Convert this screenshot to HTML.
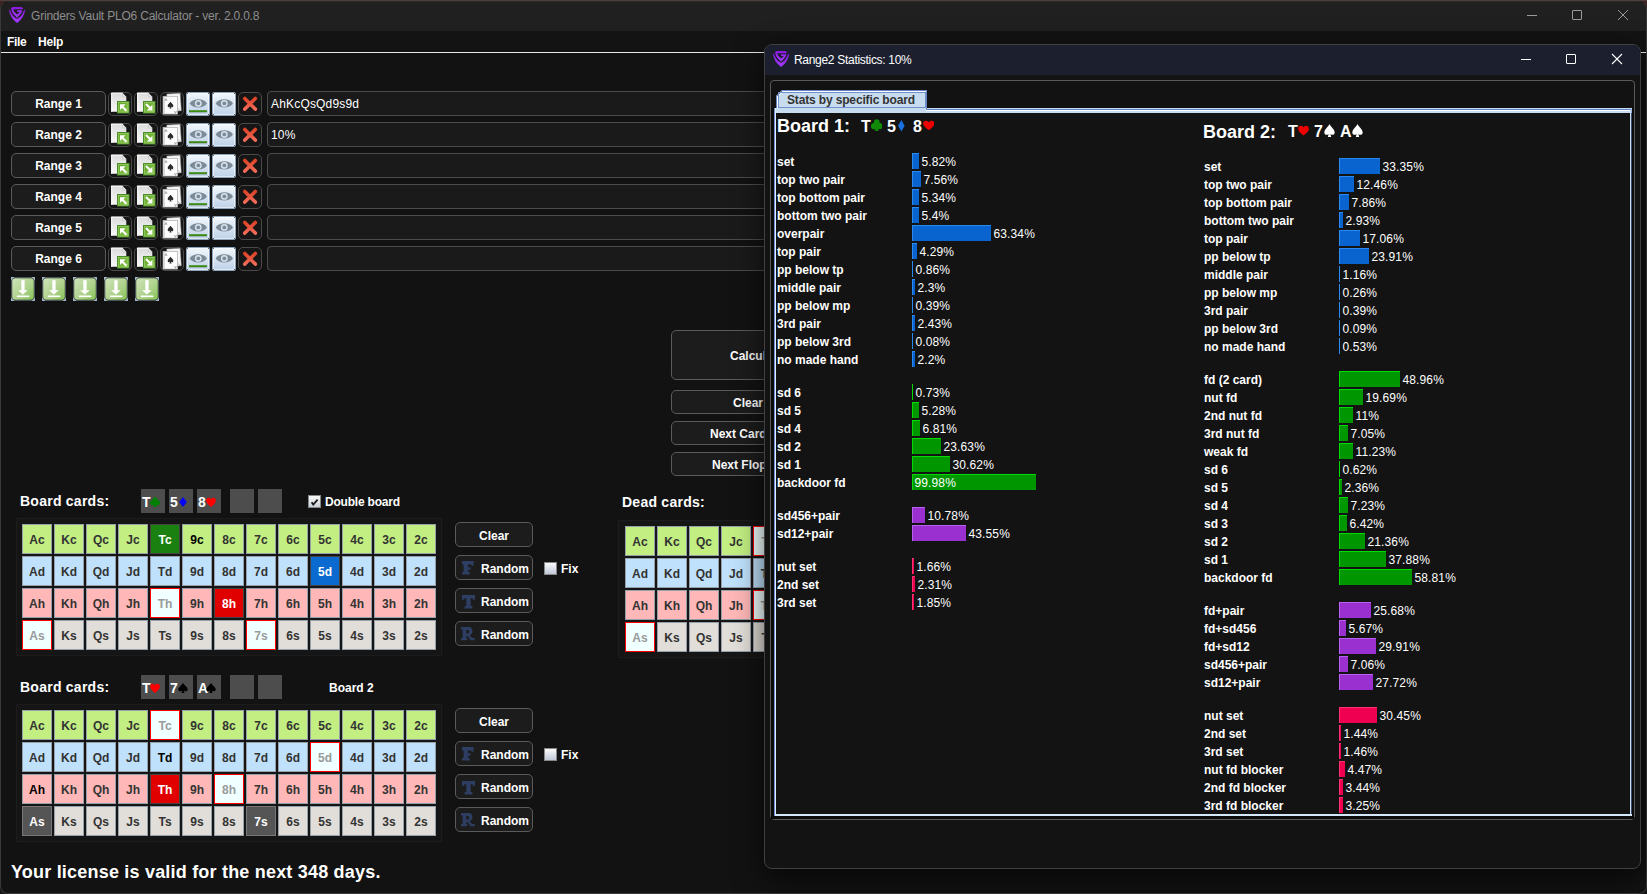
<!DOCTYPE html><html><head><meta charset='utf-8'><style>
*{box-sizing:border-box;margin:0;padding:0}
html,body{width:1647px;height:894px;overflow:hidden;background:#121212;font-family:"Liberation Sans", sans-serif}
.abs{position:absolute}
.t{position:absolute;white-space:nowrap;line-height:1}
.btn{position:absolute;border:1px solid #5a5a5a;border-radius:5px;background:#1c1c1c;color:#fff;font:bold 12px "Liberation Sans", sans-serif;text-align:center}
.ib{position:absolute;width:24px;height:24px;border:1px solid #4a4a4a;border-radius:5px;background:#161616}
.card{position:absolute;width:30px;height:30px;border:1px solid #96a0aa;font:bold 12px "Liberation Sans", sans-serif;color:#333;text-align:center;line-height:30px}
.c{background:#c2ee82} .d{background:#bfe1fb} .h{background:#ffb7b7} .s{background:#e1ddd8}
.slot{position:absolute;width:24px;height:24px;background:#4d4d4d;color:#fff;font:bold 12px "Liberation Sans", sans-serif;line-height:24px;white-space:nowrap;overflow:hidden}
.lbl{position:absolute;color:#fff;font:bold 12px "Liberation Sans", sans-serif;white-space:nowrap;line-height:14px;letter-spacing:0px}
.pct{position:absolute;color:#fff;font:12px "Liberation Sans", sans-serif;white-space:nowrap;line-height:14px;letter-spacing:0.12px}
.bar{position:absolute;height:16px}
</style></head><body>
<div class=abs style='left:0;top:0;width:1647px;height:894px;background:#161616'></div>
<div class=abs style='left:0;top:0;width:12px;height:12px;background:#3c2422'></div>
<div class=abs style='left:1635px;top:0;width:12px;height:12px;background:#3c2422'></div>
<div class=abs style='left:0;top:0;width:1647px;height:1px;background:#4e3f3d'></div>
<div class=abs style='left:0;top:1px;width:1647px;height:893px;border:1px solid #383838;border-top-color:#2a2a2a;border-radius:8px;background:#121212;overflow:hidden'>
<div class=abs style='left:0;top:0;width:1647px;height:30px;background:#202020'></div>
</div>
<svg class=abs style='left:5px;top:4px' width='24' height='22' viewBox='0 0 24 22'>
<defs><linearGradient id='lg9' x1='0' y1='0' x2='0' y2='1'><stop offset='0' stop-color='#8a18e0'/><stop offset='1' stop-color='#a43cff'/></linearGradient></defs>
<path d='M3.9 5.6 Q4.6 13.5 12.07 19.1 Q19.54 13.5 20.24 5.6 L19.14 5.9 Q17.0 12.6 12.07 14.8 Q7.14 12.6 5.0 5.9 Z' fill='url(#lg9)'/>
<path d='M6.0 4.2 L7.6 2.9 L16.6 2.9 L18.2 4.8 L17.7 5.3 L8.4 5.3 L9.1 7.4 L12.07 10.6 L14.8 8.1 L12.07 8.1 L12.07 6.2 L17.1 6.2 L17.2 7.4 L15.8 9.85 L12.07 13.8 L8.1 9.85 L6.9 7.4 Z' fill='url(#lg9)'/>
</svg>
<div class=t style='left:31px;top:9px;color:#8e8e8e;font:12px "Liberation Sans", sans-serif;letter-spacing:-0.2px'>Grinders Vault PLO6 Calculator - ver. 2.0.0.8</div>
<div class=abs style='left:1527px;top:15px;width:10px;height:1px;background:#9a9a9a'></div>
<div class=abs style='left:1572px;top:10px;width:10px;height:10px;border:1px solid #9a9a9a;border-radius:1px'></div>
<svg class=abs style='left:1617px;top:9px' width='12' height='12'><path d='M1 1L11 11M11 1L1 11' stroke='#9a9a9a' stroke-width='1'/></svg>
<div class=abs style='left:1px;top:31px;width:1645px;height:21px;background:#131313'></div>
<div class=t style='left:7px;top:35px;color:#fff;font:bold 12px "Liberation Sans", sans-serif;letter-spacing:-0.3px'>File</div>
<div class=t style='left:38px;top:35px;color:#fff;font:bold 12px "Liberation Sans", sans-serif;letter-spacing:-0.2px'>Help</div>
<div class=abs style='left:1px;top:52px;width:1645px;height:1px;background:#e8e8e8'></div>
<div class=btn style='left:11px;top:91px;width:95px;height:25px;line-height:25px'>Range 1</div>
<div class=ib style='left:108px;top:92px'><svg class=abs style='left:-1px;top:-1px' width='24' height='24' viewBox='0 0 24 24'>
<defs><linearGradient id='pg' x1='0' y1='0' x2='0' y2='1'><stop offset='0' stop-color='#dcdcdc'/><stop offset='1' stop-color='#f8f8f8'/></linearGradient>
<linearGradient id='gq' x1='0' y1='0' x2='1' y2='1'><stop offset='0' stop-color='#5aa022'/><stop offset='1' stop-color='#8cc850'/></linearGradient></defs>
<path d='M3.2 1.1 H14.7 L18.3 4.8 V19.8 H3.2 Z' fill='url(#pg)'/>
<path d='M3.2 1.1 H14.7 M3.7 1.1 V19.8' stroke='#fff' stroke-width='1'/>
<path d='M14.6 2 V4.9 H17.6' stroke='#b8b8b8' stroke-width='0.6' fill='#f0f0f0'/>
<rect x='9.5' y='9.5' width='11.5' height='11.5' fill='url(#gq)' stroke='#4a8c2a' stroke-width='1'/>
<rect x='10.5' y='10.5' width='9.5' height='9.5' fill='none' stroke='#a8d878' stroke-width='0.7' opacity='0.8'/>
<path d='M12 12.3 H17.6 L12 17.9 Z' fill='#fff'/><path d='M13.6 13.9 L18.4 18.7' stroke='#fff' stroke-width='2.1'/>
</svg></div>
<div class=ib style='left:134px;top:92px'><svg class=abs style='left:-1px;top:-1px' width='24' height='24' viewBox='0 0 24 24'>
<defs><linearGradient id='pg' x1='0' y1='0' x2='0' y2='1'><stop offset='0' stop-color='#dcdcdc'/><stop offset='1' stop-color='#f8f8f8'/></linearGradient>
<linearGradient id='gq' x1='0' y1='0' x2='1' y2='1'><stop offset='0' stop-color='#5aa022'/><stop offset='1' stop-color='#8cc850'/></linearGradient></defs>
<path d='M3.2 1.1 H14.7 L18.3 4.8 V19.8 H3.2 Z' fill='url(#pg)'/>
<path d='M3.2 1.1 H14.7 M3.7 1.1 V19.8' stroke='#fff' stroke-width='1'/>
<path d='M14.6 2 V4.9 H17.6' stroke='#b8b8b8' stroke-width='0.6' fill='#f0f0f0'/>
<rect x='9.5' y='9.5' width='11.5' height='11.5' fill='url(#gq)' stroke='#4a8c2a' stroke-width='1'/>
<rect x='10.5' y='10.5' width='9.5' height='9.5' fill='none' stroke='#a8d878' stroke-width='0.7' opacity='0.8'/>
<path d='M18.4 18.4 V12.8 L12.8 18.4 Z' fill='#fff'/><path d='M12 12 L16.8 16.8' stroke='#fff' stroke-width='2.1'/>
</svg></div>
<div class=ib style='left:160px;top:92px'><svg class=abs style='left:-1px;top:-1px' width='24' height='24' viewBox='0 0 24 24'>
<rect x='7.3' y='1.6' width='13.4' height='17.6' fill='#f6f6f6' stroke='#9a9a9a' stroke-width='0.5' transform='rotate(-4 14 10)'/><path d='M18.5 16.5 L19.5 18.5' stroke='#888' stroke-width='0.6'/>
<rect x='3' y='4.3' width='14.6' height='17.8' fill='#fdfdfd' stroke='#a8a8a8' stroke-width='0.7'/>
<rect x='3.4' y='4.7' width='1.4' height='17' fill='#cfcfcf'/>
<path d='M10.5 9.8 C9 11.8 7.7 12.4 7.7 13.9 C7.7 15.2 9.2 15.6 10.1 14.6 L9.5 16.6 H11.5 L10.9 14.6 C11.8 15.6 13.3 15.2 13.3 13.9 C13.3 12.4 12 11.8 10.5 9.8Z' fill='#2a2a2a'/>
<path d='M5 9 L6 6.5 L7 9' stroke='#777' stroke-width='0.6' fill='none'/>
<path d='M14.5 19 L15.5 21.3 L16.5 19' stroke='#777' stroke-width='0.6' fill='none'/>
</svg></div>
<div class=abs style='left:186px;top:92px;width:24px;height:24px;border:1px solid #8ea4ba;border-radius:2px;background:linear-gradient(#f2f7fc,#bed2e8);box-shadow:inset 0 0 0 1px rgba(255,255,255,0.5)'><svg class=abs style='left:-1px;top:-1px' width='24' height='24' viewBox='0 0 24 24'>
<path d='M3.6 11.4 C7 5.9 17.6 5.9 21 11.4 C17.6 16.9 7 16.9 3.6 11.4Z' fill='#7b8b98'/>
<circle cx='12.3' cy='11.4' r='3.4' fill='#d8e2ec'/><circle cx='12.3' cy='11.4' r='1.9' fill='#7b8b98'/>
<path d='M0.5 0.5 L2 2 M23.5 0.5 L22 2 M0.5 23.5 L2 22 M23.5 23.5 L22 22' stroke='#444' stroke-width='0.8'/>
<rect x='3' y='18.2' width='18' height='2' fill='#3c8a12'/><rect x='3.5' y='20.2' width='17' height='0.8' fill='#9aa8b4' opacity='0.7'/></svg></div>
<div class=abs style='left:212px;top:92px;width:24px;height:24px;border:1px solid #8ea4ba;border-radius:2px;background:linear-gradient(#f2f7fc,#bed2e8);box-shadow:inset 0 0 0 1px rgba(255,255,255,0.5)'><svg class=abs style='left:-1px;top:-1px' width='24' height='24' viewBox='0 0 24 24'>
<path d='M3.6 11.4 C7 5.9 17.6 5.9 21 11.4 C17.6 16.9 7 16.9 3.6 11.4Z' fill='#7b8b98'/>
<circle cx='12.3' cy='11.4' r='3.4' fill='#d8e2ec'/><circle cx='12.3' cy='11.4' r='1.9' fill='#7b8b98'/>
<path d='M0.5 0.5 L2 2 M23.5 0.5 L22 2 M0.5 23.5 L2 22 M23.5 23.5 L22 22' stroke='#444' stroke-width='0.8'/>
</svg></div>
<div class=ib style='left:238px;top:92px'><svg class=abs style='left:-1px;top:-1px' width='24' height='24' viewBox='0 0 24 24'>
<defs><linearGradient id='xg' x1='0' y1='0' x2='0' y2='1'><stop offset='0' stop-color='#dc4428'/><stop offset='1' stop-color='#f46c5a'/></linearGradient></defs>
<path d='M6.8 6.5 L17.3 17.1 M17.3 6.5 L6.8 17.1' stroke='url(#xg)' stroke-width='3.6' stroke-linecap='round'/>
</svg></div>
<div class=abs style='left:267px;top:91px;width:520px;height:25px;border:1px solid #4c4c4c;border-radius:4px;background:#1a1a1a'></div>
<div class=t style='left:271px;top:97px;color:#fff;font:12px "Liberation Sans", sans-serif;letter-spacing:0.18px'>AhKcQsQd9s9d</div>
<div class=btn style='left:11px;top:122px;width:95px;height:25px;line-height:25px'>Range 2</div>
<div class=ib style='left:108px;top:123px'><svg class=abs style='left:-1px;top:-1px' width='24' height='24' viewBox='0 0 24 24'>
<defs><linearGradient id='pg' x1='0' y1='0' x2='0' y2='1'><stop offset='0' stop-color='#dcdcdc'/><stop offset='1' stop-color='#f8f8f8'/></linearGradient>
<linearGradient id='gq' x1='0' y1='0' x2='1' y2='1'><stop offset='0' stop-color='#5aa022'/><stop offset='1' stop-color='#8cc850'/></linearGradient></defs>
<path d='M3.2 1.1 H14.7 L18.3 4.8 V19.8 H3.2 Z' fill='url(#pg)'/>
<path d='M3.2 1.1 H14.7 M3.7 1.1 V19.8' stroke='#fff' stroke-width='1'/>
<path d='M14.6 2 V4.9 H17.6' stroke='#b8b8b8' stroke-width='0.6' fill='#f0f0f0'/>
<rect x='9.5' y='9.5' width='11.5' height='11.5' fill='url(#gq)' stroke='#4a8c2a' stroke-width='1'/>
<rect x='10.5' y='10.5' width='9.5' height='9.5' fill='none' stroke='#a8d878' stroke-width='0.7' opacity='0.8'/>
<path d='M12 12.3 H17.6 L12 17.9 Z' fill='#fff'/><path d='M13.6 13.9 L18.4 18.7' stroke='#fff' stroke-width='2.1'/>
</svg></div>
<div class=ib style='left:134px;top:123px'><svg class=abs style='left:-1px;top:-1px' width='24' height='24' viewBox='0 0 24 24'>
<defs><linearGradient id='pg' x1='0' y1='0' x2='0' y2='1'><stop offset='0' stop-color='#dcdcdc'/><stop offset='1' stop-color='#f8f8f8'/></linearGradient>
<linearGradient id='gq' x1='0' y1='0' x2='1' y2='1'><stop offset='0' stop-color='#5aa022'/><stop offset='1' stop-color='#8cc850'/></linearGradient></defs>
<path d='M3.2 1.1 H14.7 L18.3 4.8 V19.8 H3.2 Z' fill='url(#pg)'/>
<path d='M3.2 1.1 H14.7 M3.7 1.1 V19.8' stroke='#fff' stroke-width='1'/>
<path d='M14.6 2 V4.9 H17.6' stroke='#b8b8b8' stroke-width='0.6' fill='#f0f0f0'/>
<rect x='9.5' y='9.5' width='11.5' height='11.5' fill='url(#gq)' stroke='#4a8c2a' stroke-width='1'/>
<rect x='10.5' y='10.5' width='9.5' height='9.5' fill='none' stroke='#a8d878' stroke-width='0.7' opacity='0.8'/>
<path d='M18.4 18.4 V12.8 L12.8 18.4 Z' fill='#fff'/><path d='M12 12 L16.8 16.8' stroke='#fff' stroke-width='2.1'/>
</svg></div>
<div class=ib style='left:160px;top:123px'><svg class=abs style='left:-1px;top:-1px' width='24' height='24' viewBox='0 0 24 24'>
<rect x='7.3' y='1.6' width='13.4' height='17.6' fill='#f6f6f6' stroke='#9a9a9a' stroke-width='0.5' transform='rotate(-4 14 10)'/><path d='M18.5 16.5 L19.5 18.5' stroke='#888' stroke-width='0.6'/>
<rect x='3' y='4.3' width='14.6' height='17.8' fill='#fdfdfd' stroke='#a8a8a8' stroke-width='0.7'/>
<rect x='3.4' y='4.7' width='1.4' height='17' fill='#cfcfcf'/>
<path d='M10.5 9.8 C9 11.8 7.7 12.4 7.7 13.9 C7.7 15.2 9.2 15.6 10.1 14.6 L9.5 16.6 H11.5 L10.9 14.6 C11.8 15.6 13.3 15.2 13.3 13.9 C13.3 12.4 12 11.8 10.5 9.8Z' fill='#2a2a2a'/>
<path d='M5 9 L6 6.5 L7 9' stroke='#777' stroke-width='0.6' fill='none'/>
<path d='M14.5 19 L15.5 21.3 L16.5 19' stroke='#777' stroke-width='0.6' fill='none'/>
</svg></div>
<div class=abs style='left:186px;top:123px;width:24px;height:24px;border:1px solid #8ea4ba;border-radius:2px;background:linear-gradient(#f2f7fc,#bed2e8);box-shadow:inset 0 0 0 1px rgba(255,255,255,0.5)'><svg class=abs style='left:-1px;top:-1px' width='24' height='24' viewBox='0 0 24 24'>
<path d='M3.6 11.4 C7 5.9 17.6 5.9 21 11.4 C17.6 16.9 7 16.9 3.6 11.4Z' fill='#7b8b98'/>
<circle cx='12.3' cy='11.4' r='3.4' fill='#d8e2ec'/><circle cx='12.3' cy='11.4' r='1.9' fill='#7b8b98'/>
<path d='M0.5 0.5 L2 2 M23.5 0.5 L22 2 M0.5 23.5 L2 22 M23.5 23.5 L22 22' stroke='#444' stroke-width='0.8'/>
<rect x='3' y='18.2' width='18' height='2' fill='#3c8a12'/><rect x='3.5' y='20.2' width='17' height='0.8' fill='#9aa8b4' opacity='0.7'/></svg></div>
<div class=abs style='left:212px;top:123px;width:24px;height:24px;border:1px solid #8ea4ba;border-radius:2px;background:linear-gradient(#f2f7fc,#bed2e8);box-shadow:inset 0 0 0 1px rgba(255,255,255,0.5)'><svg class=abs style='left:-1px;top:-1px' width='24' height='24' viewBox='0 0 24 24'>
<path d='M3.6 11.4 C7 5.9 17.6 5.9 21 11.4 C17.6 16.9 7 16.9 3.6 11.4Z' fill='#7b8b98'/>
<circle cx='12.3' cy='11.4' r='3.4' fill='#d8e2ec'/><circle cx='12.3' cy='11.4' r='1.9' fill='#7b8b98'/>
<path d='M0.5 0.5 L2 2 M23.5 0.5 L22 2 M0.5 23.5 L2 22 M23.5 23.5 L22 22' stroke='#444' stroke-width='0.8'/>
</svg></div>
<div class=ib style='left:238px;top:123px'><svg class=abs style='left:-1px;top:-1px' width='24' height='24' viewBox='0 0 24 24'>
<defs><linearGradient id='xg' x1='0' y1='0' x2='0' y2='1'><stop offset='0' stop-color='#dc4428'/><stop offset='1' stop-color='#f46c5a'/></linearGradient></defs>
<path d='M6.8 6.5 L17.3 17.1 M17.3 6.5 L6.8 17.1' stroke='url(#xg)' stroke-width='3.6' stroke-linecap='round'/>
</svg></div>
<div class=abs style='left:267px;top:122px;width:520px;height:25px;border:1px solid #4c4c4c;border-radius:4px;background:#1a1a1a'></div>
<div class=t style='left:271px;top:128px;color:#fff;font:12px "Liberation Sans", sans-serif;letter-spacing:0.18px'>10%</div>
<div class=btn style='left:11px;top:153px;width:95px;height:25px;line-height:25px'>Range 3</div>
<div class=ib style='left:108px;top:154px'><svg class=abs style='left:-1px;top:-1px' width='24' height='24' viewBox='0 0 24 24'>
<defs><linearGradient id='pg' x1='0' y1='0' x2='0' y2='1'><stop offset='0' stop-color='#dcdcdc'/><stop offset='1' stop-color='#f8f8f8'/></linearGradient>
<linearGradient id='gq' x1='0' y1='0' x2='1' y2='1'><stop offset='0' stop-color='#5aa022'/><stop offset='1' stop-color='#8cc850'/></linearGradient></defs>
<path d='M3.2 1.1 H14.7 L18.3 4.8 V19.8 H3.2 Z' fill='url(#pg)'/>
<path d='M3.2 1.1 H14.7 M3.7 1.1 V19.8' stroke='#fff' stroke-width='1'/>
<path d='M14.6 2 V4.9 H17.6' stroke='#b8b8b8' stroke-width='0.6' fill='#f0f0f0'/>
<rect x='9.5' y='9.5' width='11.5' height='11.5' fill='url(#gq)' stroke='#4a8c2a' stroke-width='1'/>
<rect x='10.5' y='10.5' width='9.5' height='9.5' fill='none' stroke='#a8d878' stroke-width='0.7' opacity='0.8'/>
<path d='M12 12.3 H17.6 L12 17.9 Z' fill='#fff'/><path d='M13.6 13.9 L18.4 18.7' stroke='#fff' stroke-width='2.1'/>
</svg></div>
<div class=ib style='left:134px;top:154px'><svg class=abs style='left:-1px;top:-1px' width='24' height='24' viewBox='0 0 24 24'>
<defs><linearGradient id='pg' x1='0' y1='0' x2='0' y2='1'><stop offset='0' stop-color='#dcdcdc'/><stop offset='1' stop-color='#f8f8f8'/></linearGradient>
<linearGradient id='gq' x1='0' y1='0' x2='1' y2='1'><stop offset='0' stop-color='#5aa022'/><stop offset='1' stop-color='#8cc850'/></linearGradient></defs>
<path d='M3.2 1.1 H14.7 L18.3 4.8 V19.8 H3.2 Z' fill='url(#pg)'/>
<path d='M3.2 1.1 H14.7 M3.7 1.1 V19.8' stroke='#fff' stroke-width='1'/>
<path d='M14.6 2 V4.9 H17.6' stroke='#b8b8b8' stroke-width='0.6' fill='#f0f0f0'/>
<rect x='9.5' y='9.5' width='11.5' height='11.5' fill='url(#gq)' stroke='#4a8c2a' stroke-width='1'/>
<rect x='10.5' y='10.5' width='9.5' height='9.5' fill='none' stroke='#a8d878' stroke-width='0.7' opacity='0.8'/>
<path d='M18.4 18.4 V12.8 L12.8 18.4 Z' fill='#fff'/><path d='M12 12 L16.8 16.8' stroke='#fff' stroke-width='2.1'/>
</svg></div>
<div class=ib style='left:160px;top:154px'><svg class=abs style='left:-1px;top:-1px' width='24' height='24' viewBox='0 0 24 24'>
<rect x='7.3' y='1.6' width='13.4' height='17.6' fill='#f6f6f6' stroke='#9a9a9a' stroke-width='0.5' transform='rotate(-4 14 10)'/><path d='M18.5 16.5 L19.5 18.5' stroke='#888' stroke-width='0.6'/>
<rect x='3' y='4.3' width='14.6' height='17.8' fill='#fdfdfd' stroke='#a8a8a8' stroke-width='0.7'/>
<rect x='3.4' y='4.7' width='1.4' height='17' fill='#cfcfcf'/>
<path d='M10.5 9.8 C9 11.8 7.7 12.4 7.7 13.9 C7.7 15.2 9.2 15.6 10.1 14.6 L9.5 16.6 H11.5 L10.9 14.6 C11.8 15.6 13.3 15.2 13.3 13.9 C13.3 12.4 12 11.8 10.5 9.8Z' fill='#2a2a2a'/>
<path d='M5 9 L6 6.5 L7 9' stroke='#777' stroke-width='0.6' fill='none'/>
<path d='M14.5 19 L15.5 21.3 L16.5 19' stroke='#777' stroke-width='0.6' fill='none'/>
</svg></div>
<div class=abs style='left:186px;top:154px;width:24px;height:24px;border:1px solid #8ea4ba;border-radius:2px;background:linear-gradient(#f2f7fc,#bed2e8);box-shadow:inset 0 0 0 1px rgba(255,255,255,0.5)'><svg class=abs style='left:-1px;top:-1px' width='24' height='24' viewBox='0 0 24 24'>
<path d='M3.6 11.4 C7 5.9 17.6 5.9 21 11.4 C17.6 16.9 7 16.9 3.6 11.4Z' fill='#7b8b98'/>
<circle cx='12.3' cy='11.4' r='3.4' fill='#d8e2ec'/><circle cx='12.3' cy='11.4' r='1.9' fill='#7b8b98'/>
<path d='M0.5 0.5 L2 2 M23.5 0.5 L22 2 M0.5 23.5 L2 22 M23.5 23.5 L22 22' stroke='#444' stroke-width='0.8'/>
<rect x='3' y='18.2' width='18' height='2' fill='#3c8a12'/><rect x='3.5' y='20.2' width='17' height='0.8' fill='#9aa8b4' opacity='0.7'/></svg></div>
<div class=abs style='left:212px;top:154px;width:24px;height:24px;border:1px solid #8ea4ba;border-radius:2px;background:linear-gradient(#f2f7fc,#bed2e8);box-shadow:inset 0 0 0 1px rgba(255,255,255,0.5)'><svg class=abs style='left:-1px;top:-1px' width='24' height='24' viewBox='0 0 24 24'>
<path d='M3.6 11.4 C7 5.9 17.6 5.9 21 11.4 C17.6 16.9 7 16.9 3.6 11.4Z' fill='#7b8b98'/>
<circle cx='12.3' cy='11.4' r='3.4' fill='#d8e2ec'/><circle cx='12.3' cy='11.4' r='1.9' fill='#7b8b98'/>
<path d='M0.5 0.5 L2 2 M23.5 0.5 L22 2 M0.5 23.5 L2 22 M23.5 23.5 L22 22' stroke='#444' stroke-width='0.8'/>
</svg></div>
<div class=ib style='left:238px;top:154px'><svg class=abs style='left:-1px;top:-1px' width='24' height='24' viewBox='0 0 24 24'>
<defs><linearGradient id='xg' x1='0' y1='0' x2='0' y2='1'><stop offset='0' stop-color='#dc4428'/><stop offset='1' stop-color='#f46c5a'/></linearGradient></defs>
<path d='M6.8 6.5 L17.3 17.1 M17.3 6.5 L6.8 17.1' stroke='url(#xg)' stroke-width='3.6' stroke-linecap='round'/>
</svg></div>
<div class=abs style='left:267px;top:153px;width:520px;height:25px;border:1px solid #4c4c4c;border-radius:4px;background:#1a1a1a'></div>
<div class=t style='left:271px;top:159px;color:#fff;font:12px "Liberation Sans", sans-serif;letter-spacing:0.18px'></div>
<div class=btn style='left:11px;top:184px;width:95px;height:25px;line-height:25px'>Range 4</div>
<div class=ib style='left:108px;top:185px'><svg class=abs style='left:-1px;top:-1px' width='24' height='24' viewBox='0 0 24 24'>
<defs><linearGradient id='pg' x1='0' y1='0' x2='0' y2='1'><stop offset='0' stop-color='#dcdcdc'/><stop offset='1' stop-color='#f8f8f8'/></linearGradient>
<linearGradient id='gq' x1='0' y1='0' x2='1' y2='1'><stop offset='0' stop-color='#5aa022'/><stop offset='1' stop-color='#8cc850'/></linearGradient></defs>
<path d='M3.2 1.1 H14.7 L18.3 4.8 V19.8 H3.2 Z' fill='url(#pg)'/>
<path d='M3.2 1.1 H14.7 M3.7 1.1 V19.8' stroke='#fff' stroke-width='1'/>
<path d='M14.6 2 V4.9 H17.6' stroke='#b8b8b8' stroke-width='0.6' fill='#f0f0f0'/>
<rect x='9.5' y='9.5' width='11.5' height='11.5' fill='url(#gq)' stroke='#4a8c2a' stroke-width='1'/>
<rect x='10.5' y='10.5' width='9.5' height='9.5' fill='none' stroke='#a8d878' stroke-width='0.7' opacity='0.8'/>
<path d='M12 12.3 H17.6 L12 17.9 Z' fill='#fff'/><path d='M13.6 13.9 L18.4 18.7' stroke='#fff' stroke-width='2.1'/>
</svg></div>
<div class=ib style='left:134px;top:185px'><svg class=abs style='left:-1px;top:-1px' width='24' height='24' viewBox='0 0 24 24'>
<defs><linearGradient id='pg' x1='0' y1='0' x2='0' y2='1'><stop offset='0' stop-color='#dcdcdc'/><stop offset='1' stop-color='#f8f8f8'/></linearGradient>
<linearGradient id='gq' x1='0' y1='0' x2='1' y2='1'><stop offset='0' stop-color='#5aa022'/><stop offset='1' stop-color='#8cc850'/></linearGradient></defs>
<path d='M3.2 1.1 H14.7 L18.3 4.8 V19.8 H3.2 Z' fill='url(#pg)'/>
<path d='M3.2 1.1 H14.7 M3.7 1.1 V19.8' stroke='#fff' stroke-width='1'/>
<path d='M14.6 2 V4.9 H17.6' stroke='#b8b8b8' stroke-width='0.6' fill='#f0f0f0'/>
<rect x='9.5' y='9.5' width='11.5' height='11.5' fill='url(#gq)' stroke='#4a8c2a' stroke-width='1'/>
<rect x='10.5' y='10.5' width='9.5' height='9.5' fill='none' stroke='#a8d878' stroke-width='0.7' opacity='0.8'/>
<path d='M18.4 18.4 V12.8 L12.8 18.4 Z' fill='#fff'/><path d='M12 12 L16.8 16.8' stroke='#fff' stroke-width='2.1'/>
</svg></div>
<div class=ib style='left:160px;top:185px'><svg class=abs style='left:-1px;top:-1px' width='24' height='24' viewBox='0 0 24 24'>
<rect x='7.3' y='1.6' width='13.4' height='17.6' fill='#f6f6f6' stroke='#9a9a9a' stroke-width='0.5' transform='rotate(-4 14 10)'/><path d='M18.5 16.5 L19.5 18.5' stroke='#888' stroke-width='0.6'/>
<rect x='3' y='4.3' width='14.6' height='17.8' fill='#fdfdfd' stroke='#a8a8a8' stroke-width='0.7'/>
<rect x='3.4' y='4.7' width='1.4' height='17' fill='#cfcfcf'/>
<path d='M10.5 9.8 C9 11.8 7.7 12.4 7.7 13.9 C7.7 15.2 9.2 15.6 10.1 14.6 L9.5 16.6 H11.5 L10.9 14.6 C11.8 15.6 13.3 15.2 13.3 13.9 C13.3 12.4 12 11.8 10.5 9.8Z' fill='#2a2a2a'/>
<path d='M5 9 L6 6.5 L7 9' stroke='#777' stroke-width='0.6' fill='none'/>
<path d='M14.5 19 L15.5 21.3 L16.5 19' stroke='#777' stroke-width='0.6' fill='none'/>
</svg></div>
<div class=abs style='left:186px;top:185px;width:24px;height:24px;border:1px solid #8ea4ba;border-radius:2px;background:linear-gradient(#f2f7fc,#bed2e8);box-shadow:inset 0 0 0 1px rgba(255,255,255,0.5)'><svg class=abs style='left:-1px;top:-1px' width='24' height='24' viewBox='0 0 24 24'>
<path d='M3.6 11.4 C7 5.9 17.6 5.9 21 11.4 C17.6 16.9 7 16.9 3.6 11.4Z' fill='#7b8b98'/>
<circle cx='12.3' cy='11.4' r='3.4' fill='#d8e2ec'/><circle cx='12.3' cy='11.4' r='1.9' fill='#7b8b98'/>
<path d='M0.5 0.5 L2 2 M23.5 0.5 L22 2 M0.5 23.5 L2 22 M23.5 23.5 L22 22' stroke='#444' stroke-width='0.8'/>
<rect x='3' y='18.2' width='18' height='2' fill='#3c8a12'/><rect x='3.5' y='20.2' width='17' height='0.8' fill='#9aa8b4' opacity='0.7'/></svg></div>
<div class=abs style='left:212px;top:185px;width:24px;height:24px;border:1px solid #8ea4ba;border-radius:2px;background:linear-gradient(#f2f7fc,#bed2e8);box-shadow:inset 0 0 0 1px rgba(255,255,255,0.5)'><svg class=abs style='left:-1px;top:-1px' width='24' height='24' viewBox='0 0 24 24'>
<path d='M3.6 11.4 C7 5.9 17.6 5.9 21 11.4 C17.6 16.9 7 16.9 3.6 11.4Z' fill='#7b8b98'/>
<circle cx='12.3' cy='11.4' r='3.4' fill='#d8e2ec'/><circle cx='12.3' cy='11.4' r='1.9' fill='#7b8b98'/>
<path d='M0.5 0.5 L2 2 M23.5 0.5 L22 2 M0.5 23.5 L2 22 M23.5 23.5 L22 22' stroke='#444' stroke-width='0.8'/>
</svg></div>
<div class=ib style='left:238px;top:185px'><svg class=abs style='left:-1px;top:-1px' width='24' height='24' viewBox='0 0 24 24'>
<defs><linearGradient id='xg' x1='0' y1='0' x2='0' y2='1'><stop offset='0' stop-color='#dc4428'/><stop offset='1' stop-color='#f46c5a'/></linearGradient></defs>
<path d='M6.8 6.5 L17.3 17.1 M17.3 6.5 L6.8 17.1' stroke='url(#xg)' stroke-width='3.6' stroke-linecap='round'/>
</svg></div>
<div class=abs style='left:267px;top:184px;width:520px;height:25px;border:1px solid #4c4c4c;border-radius:4px;background:#1a1a1a'></div>
<div class=t style='left:271px;top:190px;color:#fff;font:12px "Liberation Sans", sans-serif;letter-spacing:0.18px'></div>
<div class=btn style='left:11px;top:215px;width:95px;height:25px;line-height:25px'>Range 5</div>
<div class=ib style='left:108px;top:216px'><svg class=abs style='left:-1px;top:-1px' width='24' height='24' viewBox='0 0 24 24'>
<defs><linearGradient id='pg' x1='0' y1='0' x2='0' y2='1'><stop offset='0' stop-color='#dcdcdc'/><stop offset='1' stop-color='#f8f8f8'/></linearGradient>
<linearGradient id='gq' x1='0' y1='0' x2='1' y2='1'><stop offset='0' stop-color='#5aa022'/><stop offset='1' stop-color='#8cc850'/></linearGradient></defs>
<path d='M3.2 1.1 H14.7 L18.3 4.8 V19.8 H3.2 Z' fill='url(#pg)'/>
<path d='M3.2 1.1 H14.7 M3.7 1.1 V19.8' stroke='#fff' stroke-width='1'/>
<path d='M14.6 2 V4.9 H17.6' stroke='#b8b8b8' stroke-width='0.6' fill='#f0f0f0'/>
<rect x='9.5' y='9.5' width='11.5' height='11.5' fill='url(#gq)' stroke='#4a8c2a' stroke-width='1'/>
<rect x='10.5' y='10.5' width='9.5' height='9.5' fill='none' stroke='#a8d878' stroke-width='0.7' opacity='0.8'/>
<path d='M12 12.3 H17.6 L12 17.9 Z' fill='#fff'/><path d='M13.6 13.9 L18.4 18.7' stroke='#fff' stroke-width='2.1'/>
</svg></div>
<div class=ib style='left:134px;top:216px'><svg class=abs style='left:-1px;top:-1px' width='24' height='24' viewBox='0 0 24 24'>
<defs><linearGradient id='pg' x1='0' y1='0' x2='0' y2='1'><stop offset='0' stop-color='#dcdcdc'/><stop offset='1' stop-color='#f8f8f8'/></linearGradient>
<linearGradient id='gq' x1='0' y1='0' x2='1' y2='1'><stop offset='0' stop-color='#5aa022'/><stop offset='1' stop-color='#8cc850'/></linearGradient></defs>
<path d='M3.2 1.1 H14.7 L18.3 4.8 V19.8 H3.2 Z' fill='url(#pg)'/>
<path d='M3.2 1.1 H14.7 M3.7 1.1 V19.8' stroke='#fff' stroke-width='1'/>
<path d='M14.6 2 V4.9 H17.6' stroke='#b8b8b8' stroke-width='0.6' fill='#f0f0f0'/>
<rect x='9.5' y='9.5' width='11.5' height='11.5' fill='url(#gq)' stroke='#4a8c2a' stroke-width='1'/>
<rect x='10.5' y='10.5' width='9.5' height='9.5' fill='none' stroke='#a8d878' stroke-width='0.7' opacity='0.8'/>
<path d='M18.4 18.4 V12.8 L12.8 18.4 Z' fill='#fff'/><path d='M12 12 L16.8 16.8' stroke='#fff' stroke-width='2.1'/>
</svg></div>
<div class=ib style='left:160px;top:216px'><svg class=abs style='left:-1px;top:-1px' width='24' height='24' viewBox='0 0 24 24'>
<rect x='7.3' y='1.6' width='13.4' height='17.6' fill='#f6f6f6' stroke='#9a9a9a' stroke-width='0.5' transform='rotate(-4 14 10)'/><path d='M18.5 16.5 L19.5 18.5' stroke='#888' stroke-width='0.6'/>
<rect x='3' y='4.3' width='14.6' height='17.8' fill='#fdfdfd' stroke='#a8a8a8' stroke-width='0.7'/>
<rect x='3.4' y='4.7' width='1.4' height='17' fill='#cfcfcf'/>
<path d='M10.5 9.8 C9 11.8 7.7 12.4 7.7 13.9 C7.7 15.2 9.2 15.6 10.1 14.6 L9.5 16.6 H11.5 L10.9 14.6 C11.8 15.6 13.3 15.2 13.3 13.9 C13.3 12.4 12 11.8 10.5 9.8Z' fill='#2a2a2a'/>
<path d='M5 9 L6 6.5 L7 9' stroke='#777' stroke-width='0.6' fill='none'/>
<path d='M14.5 19 L15.5 21.3 L16.5 19' stroke='#777' stroke-width='0.6' fill='none'/>
</svg></div>
<div class=abs style='left:186px;top:216px;width:24px;height:24px;border:1px solid #8ea4ba;border-radius:2px;background:linear-gradient(#f2f7fc,#bed2e8);box-shadow:inset 0 0 0 1px rgba(255,255,255,0.5)'><svg class=abs style='left:-1px;top:-1px' width='24' height='24' viewBox='0 0 24 24'>
<path d='M3.6 11.4 C7 5.9 17.6 5.9 21 11.4 C17.6 16.9 7 16.9 3.6 11.4Z' fill='#7b8b98'/>
<circle cx='12.3' cy='11.4' r='3.4' fill='#d8e2ec'/><circle cx='12.3' cy='11.4' r='1.9' fill='#7b8b98'/>
<path d='M0.5 0.5 L2 2 M23.5 0.5 L22 2 M0.5 23.5 L2 22 M23.5 23.5 L22 22' stroke='#444' stroke-width='0.8'/>
<rect x='3' y='18.2' width='18' height='2' fill='#3c8a12'/><rect x='3.5' y='20.2' width='17' height='0.8' fill='#9aa8b4' opacity='0.7'/></svg></div>
<div class=abs style='left:212px;top:216px;width:24px;height:24px;border:1px solid #8ea4ba;border-radius:2px;background:linear-gradient(#f2f7fc,#bed2e8);box-shadow:inset 0 0 0 1px rgba(255,255,255,0.5)'><svg class=abs style='left:-1px;top:-1px' width='24' height='24' viewBox='0 0 24 24'>
<path d='M3.6 11.4 C7 5.9 17.6 5.9 21 11.4 C17.6 16.9 7 16.9 3.6 11.4Z' fill='#7b8b98'/>
<circle cx='12.3' cy='11.4' r='3.4' fill='#d8e2ec'/><circle cx='12.3' cy='11.4' r='1.9' fill='#7b8b98'/>
<path d='M0.5 0.5 L2 2 M23.5 0.5 L22 2 M0.5 23.5 L2 22 M23.5 23.5 L22 22' stroke='#444' stroke-width='0.8'/>
</svg></div>
<div class=ib style='left:238px;top:216px'><svg class=abs style='left:-1px;top:-1px' width='24' height='24' viewBox='0 0 24 24'>
<defs><linearGradient id='xg' x1='0' y1='0' x2='0' y2='1'><stop offset='0' stop-color='#dc4428'/><stop offset='1' stop-color='#f46c5a'/></linearGradient></defs>
<path d='M6.8 6.5 L17.3 17.1 M17.3 6.5 L6.8 17.1' stroke='url(#xg)' stroke-width='3.6' stroke-linecap='round'/>
</svg></div>
<div class=abs style='left:267px;top:215px;width:520px;height:25px;border:1px solid #4c4c4c;border-radius:4px;background:#1a1a1a'></div>
<div class=t style='left:271px;top:221px;color:#fff;font:12px "Liberation Sans", sans-serif;letter-spacing:0.18px'></div>
<div class=btn style='left:11px;top:246px;width:95px;height:25px;line-height:25px'>Range 6</div>
<div class=ib style='left:108px;top:247px'><svg class=abs style='left:-1px;top:-1px' width='24' height='24' viewBox='0 0 24 24'>
<defs><linearGradient id='pg' x1='0' y1='0' x2='0' y2='1'><stop offset='0' stop-color='#dcdcdc'/><stop offset='1' stop-color='#f8f8f8'/></linearGradient>
<linearGradient id='gq' x1='0' y1='0' x2='1' y2='1'><stop offset='0' stop-color='#5aa022'/><stop offset='1' stop-color='#8cc850'/></linearGradient></defs>
<path d='M3.2 1.1 H14.7 L18.3 4.8 V19.8 H3.2 Z' fill='url(#pg)'/>
<path d='M3.2 1.1 H14.7 M3.7 1.1 V19.8' stroke='#fff' stroke-width='1'/>
<path d='M14.6 2 V4.9 H17.6' stroke='#b8b8b8' stroke-width='0.6' fill='#f0f0f0'/>
<rect x='9.5' y='9.5' width='11.5' height='11.5' fill='url(#gq)' stroke='#4a8c2a' stroke-width='1'/>
<rect x='10.5' y='10.5' width='9.5' height='9.5' fill='none' stroke='#a8d878' stroke-width='0.7' opacity='0.8'/>
<path d='M12 12.3 H17.6 L12 17.9 Z' fill='#fff'/><path d='M13.6 13.9 L18.4 18.7' stroke='#fff' stroke-width='2.1'/>
</svg></div>
<div class=ib style='left:134px;top:247px'><svg class=abs style='left:-1px;top:-1px' width='24' height='24' viewBox='0 0 24 24'>
<defs><linearGradient id='pg' x1='0' y1='0' x2='0' y2='1'><stop offset='0' stop-color='#dcdcdc'/><stop offset='1' stop-color='#f8f8f8'/></linearGradient>
<linearGradient id='gq' x1='0' y1='0' x2='1' y2='1'><stop offset='0' stop-color='#5aa022'/><stop offset='1' stop-color='#8cc850'/></linearGradient></defs>
<path d='M3.2 1.1 H14.7 L18.3 4.8 V19.8 H3.2 Z' fill='url(#pg)'/>
<path d='M3.2 1.1 H14.7 M3.7 1.1 V19.8' stroke='#fff' stroke-width='1'/>
<path d='M14.6 2 V4.9 H17.6' stroke='#b8b8b8' stroke-width='0.6' fill='#f0f0f0'/>
<rect x='9.5' y='9.5' width='11.5' height='11.5' fill='url(#gq)' stroke='#4a8c2a' stroke-width='1'/>
<rect x='10.5' y='10.5' width='9.5' height='9.5' fill='none' stroke='#a8d878' stroke-width='0.7' opacity='0.8'/>
<path d='M18.4 18.4 V12.8 L12.8 18.4 Z' fill='#fff'/><path d='M12 12 L16.8 16.8' stroke='#fff' stroke-width='2.1'/>
</svg></div>
<div class=ib style='left:160px;top:247px'><svg class=abs style='left:-1px;top:-1px' width='24' height='24' viewBox='0 0 24 24'>
<rect x='7.3' y='1.6' width='13.4' height='17.6' fill='#f6f6f6' stroke='#9a9a9a' stroke-width='0.5' transform='rotate(-4 14 10)'/><path d='M18.5 16.5 L19.5 18.5' stroke='#888' stroke-width='0.6'/>
<rect x='3' y='4.3' width='14.6' height='17.8' fill='#fdfdfd' stroke='#a8a8a8' stroke-width='0.7'/>
<rect x='3.4' y='4.7' width='1.4' height='17' fill='#cfcfcf'/>
<path d='M10.5 9.8 C9 11.8 7.7 12.4 7.7 13.9 C7.7 15.2 9.2 15.6 10.1 14.6 L9.5 16.6 H11.5 L10.9 14.6 C11.8 15.6 13.3 15.2 13.3 13.9 C13.3 12.4 12 11.8 10.5 9.8Z' fill='#2a2a2a'/>
<path d='M5 9 L6 6.5 L7 9' stroke='#777' stroke-width='0.6' fill='none'/>
<path d='M14.5 19 L15.5 21.3 L16.5 19' stroke='#777' stroke-width='0.6' fill='none'/>
</svg></div>
<div class=abs style='left:186px;top:247px;width:24px;height:24px;border:1px solid #8ea4ba;border-radius:2px;background:linear-gradient(#f2f7fc,#bed2e8);box-shadow:inset 0 0 0 1px rgba(255,255,255,0.5)'><svg class=abs style='left:-1px;top:-1px' width='24' height='24' viewBox='0 0 24 24'>
<path d='M3.6 11.4 C7 5.9 17.6 5.9 21 11.4 C17.6 16.9 7 16.9 3.6 11.4Z' fill='#7b8b98'/>
<circle cx='12.3' cy='11.4' r='3.4' fill='#d8e2ec'/><circle cx='12.3' cy='11.4' r='1.9' fill='#7b8b98'/>
<path d='M0.5 0.5 L2 2 M23.5 0.5 L22 2 M0.5 23.5 L2 22 M23.5 23.5 L22 22' stroke='#444' stroke-width='0.8'/>
<rect x='3' y='18.2' width='18' height='2' fill='#3c8a12'/><rect x='3.5' y='20.2' width='17' height='0.8' fill='#9aa8b4' opacity='0.7'/></svg></div>
<div class=abs style='left:212px;top:247px;width:24px;height:24px;border:1px solid #8ea4ba;border-radius:2px;background:linear-gradient(#f2f7fc,#bed2e8);box-shadow:inset 0 0 0 1px rgba(255,255,255,0.5)'><svg class=abs style='left:-1px;top:-1px' width='24' height='24' viewBox='0 0 24 24'>
<path d='M3.6 11.4 C7 5.9 17.6 5.9 21 11.4 C17.6 16.9 7 16.9 3.6 11.4Z' fill='#7b8b98'/>
<circle cx='12.3' cy='11.4' r='3.4' fill='#d8e2ec'/><circle cx='12.3' cy='11.4' r='1.9' fill='#7b8b98'/>
<path d='M0.5 0.5 L2 2 M23.5 0.5 L22 2 M0.5 23.5 L2 22 M23.5 23.5 L22 22' stroke='#444' stroke-width='0.8'/>
</svg></div>
<div class=ib style='left:238px;top:247px'><svg class=abs style='left:-1px;top:-1px' width='24' height='24' viewBox='0 0 24 24'>
<defs><linearGradient id='xg' x1='0' y1='0' x2='0' y2='1'><stop offset='0' stop-color='#dc4428'/><stop offset='1' stop-color='#f46c5a'/></linearGradient></defs>
<path d='M6.8 6.5 L17.3 17.1 M17.3 6.5 L6.8 17.1' stroke='url(#xg)' stroke-width='3.6' stroke-linecap='round'/>
</svg></div>
<div class=abs style='left:267px;top:246px;width:520px;height:25px;border:1px solid #4c4c4c;border-radius:4px;background:#1a1a1a'></div>
<div class=t style='left:271px;top:252px;color:#fff;font:12px "Liberation Sans", sans-serif;letter-spacing:0.18px'></div>
<svg class=abs style='left:11px;top:277px' width='24' height='24' viewBox='0 0 24 24'>
<defs><linearGradient id='dg' x1='0' y1='0' x2='1' y2='1'><stop offset='0' stop-color='#d0e4ba'/><stop offset='0.55' stop-color='#b0d28e'/><stop offset='1' stop-color='#86c455'/></linearGradient></defs>
<rect x='0.5' y='0.5' width='23' height='23' fill='#1a1e20' stroke='#4a5458' stroke-width='1'/>
<path d='M0 0 H3.5 L0 3.5Z M24 0 H20.5 L24 3.5Z M0 24 H3.5 L0 20.5Z M24 24 H20.5 L24 20.5Z' fill='#9fb4c4'/>
<rect x='1.2' y='1.2' width='21.6' height='21.6' rx='3' fill='url(#dg)'/>
<rect x='10.3' y='3.2' width='3.3' height='10.5' fill='#fff'/><path d='M7.1 13.3 H16.7 L11.9 17.6Z' fill='#fff'/><rect x='5.9' y='18.5' width='12.4' height='1.6' fill='#fff'/>
</svg>
<svg class=abs style='left:42px;top:277px' width='24' height='24' viewBox='0 0 24 24'>
<defs><linearGradient id='dg' x1='0' y1='0' x2='1' y2='1'><stop offset='0' stop-color='#d0e4ba'/><stop offset='0.55' stop-color='#b0d28e'/><stop offset='1' stop-color='#86c455'/></linearGradient></defs>
<rect x='0.5' y='0.5' width='23' height='23' fill='#1a1e20' stroke='#4a5458' stroke-width='1'/>
<path d='M0 0 H3.5 L0 3.5Z M24 0 H20.5 L24 3.5Z M0 24 H3.5 L0 20.5Z M24 24 H20.5 L24 20.5Z' fill='#9fb4c4'/>
<rect x='1.2' y='1.2' width='21.6' height='21.6' rx='3' fill='url(#dg)'/>
<rect x='10.3' y='3.2' width='3.3' height='10.5' fill='#fff'/><path d='M7.1 13.3 H16.7 L11.9 17.6Z' fill='#fff'/><rect x='5.9' y='18.5' width='12.4' height='1.6' fill='#fff'/>
</svg>
<svg class=abs style='left:73px;top:277px' width='24' height='24' viewBox='0 0 24 24'>
<defs><linearGradient id='dg' x1='0' y1='0' x2='1' y2='1'><stop offset='0' stop-color='#d0e4ba'/><stop offset='0.55' stop-color='#b0d28e'/><stop offset='1' stop-color='#86c455'/></linearGradient></defs>
<rect x='0.5' y='0.5' width='23' height='23' fill='#1a1e20' stroke='#4a5458' stroke-width='1'/>
<path d='M0 0 H3.5 L0 3.5Z M24 0 H20.5 L24 3.5Z M0 24 H3.5 L0 20.5Z M24 24 H20.5 L24 20.5Z' fill='#9fb4c4'/>
<rect x='1.2' y='1.2' width='21.6' height='21.6' rx='3' fill='url(#dg)'/>
<rect x='10.3' y='3.2' width='3.3' height='10.5' fill='#fff'/><path d='M7.1 13.3 H16.7 L11.9 17.6Z' fill='#fff'/><rect x='5.9' y='18.5' width='12.4' height='1.6' fill='#fff'/>
</svg>
<svg class=abs style='left:104px;top:277px' width='24' height='24' viewBox='0 0 24 24'>
<defs><linearGradient id='dg' x1='0' y1='0' x2='1' y2='1'><stop offset='0' stop-color='#d0e4ba'/><stop offset='0.55' stop-color='#b0d28e'/><stop offset='1' stop-color='#86c455'/></linearGradient></defs>
<rect x='0.5' y='0.5' width='23' height='23' fill='#1a1e20' stroke='#4a5458' stroke-width='1'/>
<path d='M0 0 H3.5 L0 3.5Z M24 0 H20.5 L24 3.5Z M0 24 H3.5 L0 20.5Z M24 24 H20.5 L24 20.5Z' fill='#9fb4c4'/>
<rect x='1.2' y='1.2' width='21.6' height='21.6' rx='3' fill='url(#dg)'/>
<rect x='10.3' y='3.2' width='3.3' height='10.5' fill='#fff'/><path d='M7.1 13.3 H16.7 L11.9 17.6Z' fill='#fff'/><rect x='5.9' y='18.5' width='12.4' height='1.6' fill='#fff'/>
</svg>
<svg class=abs style='left:135px;top:277px' width='24' height='24' viewBox='0 0 24 24'>
<defs><linearGradient id='dg' x1='0' y1='0' x2='1' y2='1'><stop offset='0' stop-color='#d0e4ba'/><stop offset='0.55' stop-color='#b0d28e'/><stop offset='1' stop-color='#86c455'/></linearGradient></defs>
<rect x='0.5' y='0.5' width='23' height='23' fill='#1a1e20' stroke='#4a5458' stroke-width='1'/>
<path d='M0 0 H3.5 L0 3.5Z M24 0 H20.5 L24 3.5Z M0 24 H3.5 L0 20.5Z M24 24 H20.5 L24 20.5Z' fill='#9fb4c4'/>
<rect x='1.2' y='1.2' width='21.6' height='21.6' rx='3' fill='url(#dg)'/>
<rect x='10.3' y='3.2' width='3.3' height='10.5' fill='#fff'/><path d='M7.1 13.3 H16.7 L11.9 17.6Z' fill='#fff'/><rect x='5.9' y='18.5' width='12.4' height='1.6' fill='#fff'/>
</svg>
<div class=btn style='left:671px;top:330px;width:175px;height:50px;line-height:50px;padding-left:0px;text-align:left'><span style='position:absolute;left:58px'>Calculate</span></div>
<div class=btn style='left:671px;top:390px;width:175px;height:24px;line-height:24px;text-align:left'><span style='position:absolute;left:61px'>Clear</span></div>
<div class=btn style='left:671px;top:421px;width:175px;height:24px;line-height:24px;text-align:left'><span style='position:absolute;left:38px'>Next Card</span></div>
<div class=btn style='left:671px;top:452px;width:175px;height:24px;line-height:24px;text-align:left'><span style='position:absolute;left:40px'>Next Flop</span></div>
<div class=t style='left:20px;top:493px;color:#fff;font:bold 14px "Liberation Sans", sans-serif;letter-spacing:0.25px'>Board cards:</div>
<div class=slot style='left:141px;top:489px'></div><div class=t style='left:142px;top:495px;color:#fff;font:bold 14px "Liberation Sans", sans-serif;line-height:14px'>T</div><svg class=abs style='left:150px;top:497px' width='10' height='10' viewBox='0 0 10 10' preserveAspectRatio='none' fill='#008000'><circle cx='5' cy='2.7' r='2.5'/><circle cx='2.5' cy='5.7' r='2.5'/><circle cx='7.5' cy='5.7' r='2.5'/><path d='M5 4 L3.2 10 H6.8 Z'/></svg><div class=slot style='left:169px;top:489px'></div><div class=t style='left:170px;top:495px;color:#fff;font:bold 14px "Liberation Sans", sans-serif;line-height:14px'>5</div><svg class=abs style='left:178px;top:497px' width='10' height='10' viewBox='0 0 10 10' preserveAspectRatio='none' fill='#0000ff'><path d='M5 0 L8.8 5 L5 10 L1.2 5 Z'/></svg><div class=slot style='left:197px;top:489px'></div><div class=t style='left:198px;top:495px;color:#fff;font:bold 14px "Liberation Sans", sans-serif;line-height:14px'>8</div><svg class=abs style='left:206px;top:497px' width='10' height='10' viewBox='0 0 10 10' preserveAspectRatio='none' fill='#ff0000'><path d='M5 9.3 C2 6.6 0.1 5 0.1 2.8 C0.1 1.1 1.3 0.1 2.7 0.1 C3.8 0.1 4.6 0.8 5 1.7 C5.4 0.8 6.2 0.1 7.3 0.1 C8.7 0.1 9.9 1.1 9.9 2.8 C9.9 5 8 6.6 5 9.3Z' transform='translate(0 0.6)'/></svg><div class=slot style='left:230px;top:489px'></div><div class=slot style='left:258px;top:489px'></div>
<div class=abs style='left:308px;top:495px;width:13px;height:13px;border:1px solid #888;background:linear-gradient(#fafafa,#c8d0d8)'></div>
<svg class=abs style='left:309px;top:496px' width='11' height='11'><path d='M2.6 6.2 L4.3 8.6 L8.6 3.6' stroke='#1a1a1a' stroke-width='1.8' fill='none'/></svg>
<div class=t style='left:325px;top:495px;color:#fff;font:bold 12px "Liberation Sans", sans-serif;letter-spacing:-0.2px'>Double board</div>
<div class=abs style='left:16px;top:518px;width:426px;height:138px;border:1px solid #1c1c1c;background:#151515'></div>
<div class='card c' style='left:22px;top:524px'>Ac</div><div class='card c' style='left:54px;top:524px'>Kc</div><div class='card c' style='left:86px;top:524px'>Qc</div><div class='card c' style='left:118px;top:524px'>Jc</div><div class='card' style='left:150px;top:524px;background:#1a8010;color:#fff;border-color:#444'>Tc</div><div class='card c' style='left:182px;top:524px;color:#000'>9c</div><div class='card c' style='left:214px;top:524px'>8c</div><div class='card c' style='left:246px;top:524px'>7c</div><div class='card c' style='left:278px;top:524px'>6c</div><div class='card c' style='left:310px;top:524px'>5c</div><div class='card c' style='left:342px;top:524px'>4c</div><div class='card c' style='left:374px;top:524px'>3c</div><div class='card c' style='left:406px;top:524px'>2c</div><div class='card d' style='left:22px;top:556px'>Ad</div><div class='card d' style='left:54px;top:556px'>Kd</div><div class='card d' style='left:86px;top:556px'>Qd</div><div class='card d' style='left:118px;top:556px'>Jd</div><div class='card d' style='left:150px;top:556px'>Td</div><div class='card d' style='left:182px;top:556px'>9d</div><div class='card d' style='left:214px;top:556px'>8d</div><div class='card d' style='left:246px;top:556px'>7d</div><div class='card d' style='left:278px;top:556px'>6d</div><div class='card' style='left:310px;top:556px;background:#0a6ad0;color:#fff;border-color:#444'>5d</div><div class='card d' style='left:342px;top:556px'>4d</div><div class='card d' style='left:374px;top:556px'>3d</div><div class='card d' style='left:406px;top:556px'>2d</div><div class='card h' style='left:22px;top:588px'>Ah</div><div class='card h' style='left:54px;top:588px'>Kh</div><div class='card h' style='left:86px;top:588px'>Qh</div><div class='card h' style='left:118px;top:588px'>Jh</div><div class='card' style='left:150px;top:588px;background:#f0ffff;color:#9a9a9a;border:1px solid #ff0000;line-height:30px'>Th</div><div class='card h' style='left:182px;top:588px'>9h</div><div class='card' style='left:214px;top:588px;background:#e00000;color:#fff;border-color:#444'>8h</div><div class='card h' style='left:246px;top:588px'>7h</div><div class='card h' style='left:278px;top:588px'>6h</div><div class='card h' style='left:310px;top:588px'>5h</div><div class='card h' style='left:342px;top:588px'>4h</div><div class='card h' style='left:374px;top:588px'>3h</div><div class='card h' style='left:406px;top:588px'>2h</div><div class='card' style='left:22px;top:620px;background:#f0ffff;color:#9a9a9a;border:1px solid #ff0000;line-height:30px'>As</div><div class='card s' style='left:54px;top:620px'>Ks</div><div class='card s' style='left:86px;top:620px'>Qs</div><div class='card s' style='left:118px;top:620px'>Js</div><div class='card s' style='left:150px;top:620px'>Ts</div><div class='card s' style='left:182px;top:620px'>9s</div><div class='card s' style='left:214px;top:620px'>8s</div><div class='card' style='left:246px;top:620px;background:#f0ffff;color:#9a9a9a;border:1px solid #ff0000;line-height:30px'>7s</div><div class='card s' style='left:278px;top:620px'>6s</div><div class='card s' style='left:310px;top:620px'>5s</div><div class='card s' style='left:342px;top:620px'>4s</div><div class='card s' style='left:374px;top:620px'>3s</div><div class='card s' style='left:406px;top:620px'>2s</div>
<div class=btn style='left:455px;top:522px;width:78px;height:25px;line-height:27px'>Clear</div>
<div class=btn style='left:455px;top:555px;width:78px;height:25px;line-height:27px;text-align:left'><span style='position:absolute;left:25px'>Random</span></div>
<svg class=abs style='left:462.2px;top:561.2px' width='15' height='15' viewBox='0 0 15 15'><path d='M0 0 H11.6 V4.7 H9.4 V3.4 H5.95 V6.3 H8.5 V8.8 H5.95 V11 H7.8 V13.5 H0 V11 H1.6 V3.4 H0 Z' fill='#2d3e62' fill-rule='evenodd'/></svg>
<div class=btn style='left:455px;top:588px;width:78px;height:25px;line-height:27px;text-align:left'><span style='position:absolute;left:25px'>Random</span></div>
<svg class=abs style='left:461.9px;top:594.6px' width='15' height='15' viewBox='0 0 15 15'><path d='M0 0 H13 V4.7 H10.7 V3.3 H8.7 V11 H10.4 V13.4 H2.6 V11 H4.3 V3.3 H2.3 V4.7 H0 Z' fill='#2d3e62' fill-rule='evenodd'/></svg>
<div class=btn style='left:455px;top:621px;width:78px;height:25px;line-height:27px;text-align:left'><span style='position:absolute;left:25px'>Random</span></div>
<svg class=abs style='left:461.3px;top:627.2px' width='15' height='15' viewBox='0 0 15 15'><path d='M0 0 H8 C10.5 0 11.4 1.8 11.4 4.2 C11.4 6.3 10.2 7.6 8.6 8.2 L11.2 11 H13.8 V13.2 H9.6 L6.6 9 H5.3 V11 H6.3 V13.2 H0 V11 H1.6 V2.5 H0 Z M5.3 3 V6.4 H7 C7.9 6.4 8 5.6 8 4.7 C8 3.7 7.8 3 7 3 Z' fill='#2d3e62' fill-rule='evenodd'/></svg>
<div class=abs style='left:544px;top:562px;width:13px;height:13px;border:1px solid #888;background:linear-gradient(#fafafa,#c0c8d8)'></div>
<div class=t style='left:561px;top:562px;color:#fff;font:bold 12px "Liberation Sans", sans-serif'>Fix</div>
<div class=t style='left:20px;top:679px;color:#fff;font:bold 14px "Liberation Sans", sans-serif;letter-spacing:0.25px'>Board cards:</div>
<div class=slot style='left:141px;top:675px'></div><div class=t style='left:142px;top:681px;color:#fff;font:bold 14px "Liberation Sans", sans-serif;line-height:14px'>T</div><svg class=abs style='left:150px;top:683px' width='10' height='10' viewBox='0 0 10 10' preserveAspectRatio='none' fill='#ff0000'><path d='M5 9.3 C2 6.6 0.1 5 0.1 2.8 C0.1 1.1 1.3 0.1 2.7 0.1 C3.8 0.1 4.6 0.8 5 1.7 C5.4 0.8 6.2 0.1 7.3 0.1 C8.7 0.1 9.9 1.1 9.9 2.8 C9.9 5 8 6.6 5 9.3Z' transform='translate(0 0.6)'/></svg><div class=slot style='left:169px;top:675px'></div><div class=t style='left:170px;top:681px;color:#fff;font:bold 14px "Liberation Sans", sans-serif;line-height:14px'>7</div><svg class=abs style='left:178px;top:683px' width='10' height='10' viewBox='0 0 10 10' preserveAspectRatio='none' fill='#000'><path d='M5 0 C3.6 2.4 0.3 4 0.3 6.4 C0.3 8.1 2.5 8.8 4.2 7.5 L3.4 10 H6.6 L5.8 7.5 C7.5 8.8 9.7 8.1 9.7 6.4 C9.7 4 6.4 2.4 5 0Z'/></svg><div class=slot style='left:197px;top:675px'></div><div class=t style='left:198px;top:681px;color:#fff;font:bold 14px "Liberation Sans", sans-serif;line-height:14px'>A</div><svg class=abs style='left:206px;top:683px' width='10' height='10' viewBox='0 0 10 10' preserveAspectRatio='none' fill='#000'><path d='M5 0 C3.6 2.4 0.3 4 0.3 6.4 C0.3 8.1 2.5 8.8 4.2 7.5 L3.4 10 H6.6 L5.8 7.5 C7.5 8.8 9.7 8.1 9.7 6.4 C9.7 4 6.4 2.4 5 0Z'/></svg><div class=slot style='left:230px;top:675px'></div><div class=slot style='left:258px;top:675px'></div>
<div class=t style='left:329px;top:681px;color:#fff;font:bold 12px "Liberation Sans", sans-serif'>Board 2</div>
<div class=abs style='left:16px;top:704px;width:426px;height:138px;border:1px solid #1c1c1c;background:#151515'></div>
<div class='card c' style='left:22px;top:710px'>Ac</div><div class='card c' style='left:54px;top:710px'>Kc</div><div class='card c' style='left:86px;top:710px'>Qc</div><div class='card c' style='left:118px;top:710px'>Jc</div><div class='card' style='left:150px;top:710px;background:#f0ffff;color:#9a9a9a;border:1px solid #ff0000;line-height:30px'>Tc</div><div class='card c' style='left:182px;top:710px'>9c</div><div class='card c' style='left:214px;top:710px'>8c</div><div class='card c' style='left:246px;top:710px'>7c</div><div class='card c' style='left:278px;top:710px'>6c</div><div class='card c' style='left:310px;top:710px'>5c</div><div class='card c' style='left:342px;top:710px'>4c</div><div class='card c' style='left:374px;top:710px'>3c</div><div class='card c' style='left:406px;top:710px'>2c</div><div class='card d' style='left:22px;top:742px'>Ad</div><div class='card d' style='left:54px;top:742px'>Kd</div><div class='card d' style='left:86px;top:742px'>Qd</div><div class='card d' style='left:118px;top:742px'>Jd</div><div class='card d' style='left:150px;top:742px;color:#000'>Td</div><div class='card d' style='left:182px;top:742px'>9d</div><div class='card d' style='left:214px;top:742px'>8d</div><div class='card d' style='left:246px;top:742px'>7d</div><div class='card d' style='left:278px;top:742px'>6d</div><div class='card' style='left:310px;top:742px;background:#f0ffff;color:#9a9a9a;border:1px solid #ff0000;line-height:30px'>5d</div><div class='card d' style='left:342px;top:742px'>4d</div><div class='card d' style='left:374px;top:742px'>3d</div><div class='card d' style='left:406px;top:742px'>2d</div><div class='card h' style='left:22px;top:774px;color:#000'>Ah</div><div class='card h' style='left:54px;top:774px'>Kh</div><div class='card h' style='left:86px;top:774px'>Qh</div><div class='card h' style='left:118px;top:774px'>Jh</div><div class='card' style='left:150px;top:774px;background:#e00000;color:#fff;border-color:#444'>Th</div><div class='card h' style='left:182px;top:774px'>9h</div><div class='card' style='left:214px;top:774px;background:#f0ffff;color:#9a9a9a;border:1px solid #ff0000;line-height:30px'>8h</div><div class='card h' style='left:246px;top:774px'>7h</div><div class='card h' style='left:278px;top:774px'>6h</div><div class='card h' style='left:310px;top:774px'>5h</div><div class='card h' style='left:342px;top:774px'>4h</div><div class='card h' style='left:374px;top:774px'>3h</div><div class='card h' style='left:406px;top:774px'>2h</div><div class='card' style='left:22px;top:806px;background:#555;color:#fff;border-color:#777'>As</div><div class='card s' style='left:54px;top:806px'>Ks</div><div class='card s' style='left:86px;top:806px'>Qs</div><div class='card s' style='left:118px;top:806px'>Js</div><div class='card s' style='left:150px;top:806px'>Ts</div><div class='card s' style='left:182px;top:806px'>9s</div><div class='card s' style='left:214px;top:806px'>8s</div><div class='card' style='left:246px;top:806px;background:#555;color:#fff;border-color:#777'>7s</div><div class='card s' style='left:278px;top:806px'>6s</div><div class='card s' style='left:310px;top:806px'>5s</div><div class='card s' style='left:342px;top:806px'>4s</div><div class='card s' style='left:374px;top:806px'>3s</div><div class='card s' style='left:406px;top:806px'>2s</div>
<div class=btn style='left:455px;top:708px;width:78px;height:25px;line-height:27px'>Clear</div>
<div class=btn style='left:455px;top:741px;width:78px;height:25px;line-height:27px;text-align:left'><span style='position:absolute;left:25px'>Random</span></div>
<svg class=abs style='left:462.2px;top:747.2px' width='15' height='15' viewBox='0 0 15 15'><path d='M0 0 H11.6 V4.7 H9.4 V3.4 H5.95 V6.3 H8.5 V8.8 H5.95 V11 H7.8 V13.5 H0 V11 H1.6 V3.4 H0 Z' fill='#2d3e62' fill-rule='evenodd'/></svg>
<div class=btn style='left:455px;top:774px;width:78px;height:25px;line-height:27px;text-align:left'><span style='position:absolute;left:25px'>Random</span></div>
<svg class=abs style='left:461.9px;top:780.6px' width='15' height='15' viewBox='0 0 15 15'><path d='M0 0 H13 V4.7 H10.7 V3.3 H8.7 V11 H10.4 V13.4 H2.6 V11 H4.3 V3.3 H2.3 V4.7 H0 Z' fill='#2d3e62' fill-rule='evenodd'/></svg>
<div class=btn style='left:455px;top:807px;width:78px;height:25px;line-height:27px;text-align:left'><span style='position:absolute;left:25px'>Random</span></div>
<svg class=abs style='left:461.3px;top:813.2px' width='15' height='15' viewBox='0 0 15 15'><path d='M0 0 H8 C10.5 0 11.4 1.8 11.4 4.2 C11.4 6.3 10.2 7.6 8.6 8.2 L11.2 11 H13.8 V13.2 H9.6 L6.6 9 H5.3 V11 H6.3 V13.2 H0 V11 H1.6 V2.5 H0 Z M5.3 3 V6.4 H7 C7.9 6.4 8 5.6 8 4.7 C8 3.7 7.8 3 7 3 Z' fill='#2d3e62' fill-rule='evenodd'/></svg>
<div class=abs style='left:544px;top:748px;width:13px;height:13px;border:1px solid #888;background:linear-gradient(#fafafa,#c0c8d8)'></div>
<div class=t style='left:561px;top:748px;color:#fff;font:bold 12px "Liberation Sans", sans-serif'>Fix</div>
<div class=t style='left:622px;top:494px;color:#fff;font:bold 14px "Liberation Sans", sans-serif;letter-spacing:0.25px'>Dead cards:</div>
<div class=abs style='left:618px;top:520px;width:160px;height:138px;border:1px solid #1c1c1c;background:#151515'></div>
<div class='card c' style='left:625px;top:526px'>Ac</div><div class='card c' style='left:657px;top:526px'>Kc</div><div class='card c' style='left:689px;top:526px'>Qc</div><div class='card c' style='left:721px;top:526px'>Jc</div><div class='card' style='left:753px;top:526px;background:#f0ffff;color:#9a9a9a;border:1px solid #ff0000;line-height:30px'>Tc</div><div class='card d' style='left:625px;top:558px'>Ad</div><div class='card d' style='left:657px;top:558px'>Kd</div><div class='card d' style='left:689px;top:558px'>Qd</div><div class='card d' style='left:721px;top:558px'>Jd</div><div class='card d' style='left:753px;top:558px'>Td</div><div class='card h' style='left:625px;top:590px'>Ah</div><div class='card h' style='left:657px;top:590px'>Kh</div><div class='card h' style='left:689px;top:590px'>Qh</div><div class='card h' style='left:721px;top:590px'>Jh</div><div class='card' style='left:753px;top:590px;background:#f0ffff;color:#9a9a9a;border:1px solid #ff0000;line-height:30px'>Th</div><div class='card' style='left:625px;top:622px;background:#f0ffff;color:#9a9a9a;border:1px solid #ff0000;line-height:30px'>As</div><div class='card s' style='left:657px;top:622px'>Ks</div><div class='card s' style='left:689px;top:622px'>Qs</div><div class='card s' style='left:721px;top:622px'>Js</div><div class='card s' style='left:753px;top:622px'>Ts</div>
<div class=t style='left:11px;top:862px;color:#fff;font:bold 18px "Liberation Sans", sans-serif;letter-spacing:0.2px'>Your license is valid for the next 348 days.</div>
<div class=abs style='left:8px;top:893px;width:1630px;height:1px;background:#3a3a3a'></div>
<div class=abs style='left:1646px;top:30px;width:1px;height:856px;background:#3a3a3a'></div>
<div class=abs style='left:764px;top:44px;width:877px;height:825px;border-radius:8px;box-shadow:0 10px 30px 0 rgba(0,0,0,0.62)'></div>
<div class=abs style='left:764px;top:44px;width:877px;height:825px;border:1px solid #404040;border-radius:8px;background:#131313;overflow:hidden'>
<div class=abs style='left:0;top:0;width:877px;height:30px;background:#1b1f2e'></div>
</div>
<svg class=abs style='left:769px;top:48px' width='24' height='22' viewBox='0 0 24 22'>
<defs><linearGradient id='lg773' x1='0' y1='0' x2='0' y2='1'><stop offset='0' stop-color='#8a18e0'/><stop offset='1' stop-color='#a43cff'/></linearGradient></defs>
<path d='M3.9 5.6 Q4.6 13.5 12.07 19.1 Q19.54 13.5 20.24 5.6 L19.14 5.9 Q17.0 12.6 12.07 14.8 Q7.14 12.6 5.0 5.9 Z' fill='url(#lg773)'/>
<path d='M6.0 4.2 L7.6 2.9 L16.6 2.9 L18.2 4.8 L17.7 5.3 L8.4 5.3 L9.1 7.4 L12.07 10.6 L14.8 8.1 L12.07 8.1 L12.07 6.2 L17.1 6.2 L17.2 7.4 L15.8 9.85 L12.07 13.8 L8.1 9.85 L6.9 7.4 Z' fill='url(#lg773)'/>
</svg>
<div class=t style='left:794px;top:53px;color:#fff;font:12px "Liberation Sans", sans-serif;letter-spacing:-0.3px'>Range2 Statistics: 10%</div>
<div class=abs style='left:1521px;top:59px;width:10px;height:1px;background:#fff'></div>
<div class=abs style='left:1566px;top:54px;width:10px;height:10px;border:1px solid #fff;border-radius:1px'></div>
<svg class=abs style='left:1611px;top:53px' width='12' height='12'><path d='M1 1L11 11M11 1L1 11' stroke='#fff' stroke-width='1.1'/></svg>
<div class=abs style='left:770px;top:80px;width:865px;height:740px;border:1px solid #5a5a5a;border-radius:4px;background:#121212'></div>
<div class=abs style='left:771px;top:108px;width:863px;height:711px;background:#0b0b0b'></div>
<svg class=abs style='left:770px;top:84px' width='870' height='740' viewBox='770 84 870 740'>
<polygon points='776,96 782,90 927,90 927,113 776,113' fill='#c8dcf0'/>
<rect x='774' y='108' width='858' height='5' fill='#c8dcf0'/>
<polyline points='776.5,108 776.5,96.5 782.5,90.5 926.5,90.5 926.5,109.5 1631,109.5' fill='none' stroke='#6584c8' stroke-width='1'/>
<polyline points='777.5,108 777.5,96.9 782.9,91.5 925.5,91.5' fill='none' stroke='#ffffff' stroke-width='1'/>
<polyline points='926,110.5 1630,110.5' fill='none' stroke='#ffffff' stroke-width='1'/>
<rect x='778.5' y='92.5' width='147' height='15' fill='none' stroke='#7090cc' stroke-width='1'/>
<rect x='774' y='108' width='1' height='708' fill='#6f8fd0'/>
<rect x='775' y='108' width='1' height='708' fill='#dcecfc'/>
<rect x='776' y='113' width='854' height='701' fill='#131313'/>
<rect x='1630' y='110' width='1' height='706' fill='#c8dcf2'/><rect x='1631' y='109' width='1' height='707' fill='#6f8fd0' opacity='0.5'/>
<rect x='775' y='814' width='857' height='2' fill='#d4e8fc'/>
</svg>
<div class=t style='left:787px;top:93px;color:#333;font:bold 12px "Liberation Sans", sans-serif;letter-spacing:-0.15px'>Stats by specific board</div>
<div class=t style='left:777px;top:116px;color:#fff;font:bold 18px "Liberation Sans", sans-serif'>Board 1:</div><div class=t style='left:861px;top:118px;color:#fff;font:bold 16px "Liberation Sans", sans-serif'>T</div><div class=t style='left:887px;top:118px;color:#fff;font:bold 16px "Liberation Sans", sans-serif'>5</div><div class=t style='left:913px;top:118px;color:#fff;font:bold 16px "Liberation Sans", sans-serif'>8</div><svg class=abs style='left:870.5px;top:118.9px' width='11.5' height='12.6' viewBox='0 0 10 10' preserveAspectRatio='none' fill='#118a0a'><circle cx='5' cy='2.7' r='2.5'/><circle cx='2.5' cy='5.7' r='2.5'/><circle cx='7.5' cy='5.7' r='2.5'/><path d='M5 4 L3.2 10 H6.8 Z'/></svg><svg class=abs style='left:897.3px;top:120px' width='8.7' height='11.5' viewBox='0 0 10 10' preserveAspectRatio='none' fill='#1a70e0'><path d='M5 0 L8.8 5 L5 10 L1.2 5 Z'/></svg><svg class=abs style='left:922.5px;top:120px' width='11.5' height='10.4' viewBox='0 0 10 10' preserveAspectRatio='none' fill='#ee0000'><path d='M5 9.3 C2 6.6 0.1 5 0.1 2.8 C0.1 1.1 1.3 0.1 2.7 0.1 C3.8 0.1 4.6 0.8 5 1.7 C5.4 0.8 6.2 0.1 7.3 0.1 C8.7 0.1 9.9 1.1 9.9 2.8 C9.9 5 8 6.6 5 9.3Z' transform='translate(0 0.6)'/></svg>
<div class=t style='left:1203px;top:122px;color:#fff;font:bold 18px "Liberation Sans", sans-serif'>Board 2:</div><div class=t style='left:1288px;top:123px;color:#fff;font:bold 16px "Liberation Sans", sans-serif'>T</div><div class=t style='left:1314px;top:123px;color:#fff;font:bold 16px "Liberation Sans", sans-serif'>7</div><div class=t style='left:1340px;top:123px;color:#fff;font:bold 16px "Liberation Sans", sans-serif'>A</div><svg class=abs style='left:1298px;top:125.1px' width='11' height='10.7' viewBox='0 0 10 10' preserveAspectRatio='none' fill='#ee0000'><path d='M5 9.3 C2 6.6 0.1 5 0.1 2.8 C0.1 1.1 1.3 0.1 2.7 0.1 C3.8 0.1 4.6 0.8 5 1.7 C5.4 0.8 6.2 0.1 7.3 0.1 C8.7 0.1 9.9 1.1 9.9 2.8 C9.9 5 8 6.6 5 9.3Z' transform='translate(0 0.6)'/></svg><svg class=abs style='left:1323.7px;top:123.7px' width='11' height='13.2' viewBox='0 0 10 10' preserveAspectRatio='none' fill='#fff'><path d='M5 0 C3.6 2.4 0.3 4 0.3 6.4 C0.3 8.1 2.5 8.8 4.2 7.5 L3.4 10 H6.6 L5.8 7.5 C7.5 8.8 9.7 8.1 9.7 6.4 C9.7 4 6.4 2.4 5 0Z'/></svg><svg class=abs style='left:1351.6px;top:123.7px' width='11' height='13.2' viewBox='0 0 10 10' preserveAspectRatio='none' fill='#fff'><path d='M5 0 C3.6 2.4 0.3 4 0.3 6.4 C0.3 8.1 2.5 8.8 4.2 7.5 L3.4 10 H6.6 L5.8 7.5 C7.5 8.8 9.7 8.1 9.7 6.4 C9.7 4 6.4 2.4 5 0Z'/></svg>
<div class=lbl style='left:777px;top:155px'>set</div><div class=bar style='left:912px;top:153px;width:7px;background:#0a64d0;border-top:1px solid #2a8af0;border-left:1px solid #2a8af0'></div><div class=pct style='left:921.5px;top:155px'>5.82%</div><div class=lbl style='left:777px;top:173px'>top two pair</div><div class=bar style='left:912px;top:171px;width:9px;background:#0a64d0;border-top:1px solid #2a8af0;border-left:1px solid #2a8af0'></div><div class=pct style='left:923.5px;top:173px'>7.56%</div><div class=lbl style='left:777px;top:191px'>top bottom pair</div><div class=bar style='left:912px;top:189px;width:7px;background:#0a64d0;border-top:1px solid #2a8af0;border-left:1px solid #2a8af0'></div><div class=pct style='left:921.5px;top:191px'>5.34%</div><div class=lbl style='left:777px;top:209px'>bottom two pair</div><div class=bar style='left:912px;top:207px;width:7px;background:#0a64d0;border-top:1px solid #2a8af0;border-left:1px solid #2a8af0'></div><div class=pct style='left:921.5px;top:209px'>5.4%</div><div class=lbl style='left:777px;top:227px'>overpair</div><div class=bar style='left:912px;top:225px;width:79px;background:#0a64d0;border-top:1px solid #2a8af0;border-left:1px solid #2a8af0'></div><div class=pct style='left:993.5px;top:227px'>63.34%</div><div class=lbl style='left:777px;top:245px'>top pair</div><div class=bar style='left:912px;top:243px;width:5px;background:#0a64d0;border-top:1px solid #2a8af0;border-left:1px solid #2a8af0'></div><div class=pct style='left:919.5px;top:245px'>4.29%</div><div class=lbl style='left:777px;top:263px'>pp below tp</div><div class=bar style='left:912px;top:261px;width:1px;background:#0a64d0;border-top:1px solid #2a8af0;border-left:1px solid #2a8af0'></div><div class=pct style='left:915.5px;top:263px'>0.86%</div><div class=lbl style='left:777px;top:281px'>middle pair</div><div class=bar style='left:912px;top:279px;width:3px;background:#0a64d0;border-top:1px solid #2a8af0;border-left:1px solid #2a8af0'></div><div class=pct style='left:917.5px;top:281px'>2.3%</div><div class=lbl style='left:777px;top:299px'>pp below mp</div><div class=bar style='left:912px;top:297px;width:1px;background:#0a64d0;border-top:1px solid #2a8af0;border-left:1px solid #2a8af0'></div><div class=pct style='left:915.5px;top:299px'>0.39%</div><div class=lbl style='left:777px;top:317px'>3rd pair</div><div class=bar style='left:912px;top:315px;width:3px;background:#0a64d0;border-top:1px solid #2a8af0;border-left:1px solid #2a8af0'></div><div class=pct style='left:917.5px;top:317px'>2.43%</div><div class=lbl style='left:777px;top:335px'>pp below 3rd</div><div class=bar style='left:912px;top:333px;width:1px;background:#0a64d0;border-top:1px solid #2a8af0;border-left:1px solid #2a8af0'></div><div class=pct style='left:915.5px;top:335px'>0.08%</div><div class=lbl style='left:777px;top:353px'>no made hand</div><div class=bar style='left:912px;top:351px;width:3px;background:#0a64d0;border-top:1px solid #2a8af0;border-left:1px solid #2a8af0'></div><div class=pct style='left:917.5px;top:353px'>2.2%</div><div class=lbl style='left:777px;top:386px'>sd 6</div><div class=bar style='left:912px;top:384px;width:1px;background:#009600;border-top:1px solid #00dc00;border-left:1px solid #00dc00'></div><div class=pct style='left:915.5px;top:386px'>0.73%</div><div class=lbl style='left:777px;top:404px'>sd 5</div><div class=bar style='left:912px;top:402px;width:7px;background:#009600;border-top:1px solid #00dc00;border-left:1px solid #00dc00'></div><div class=pct style='left:921.5px;top:404px'>5.28%</div><div class=lbl style='left:777px;top:422px'>sd 4</div><div class=bar style='left:912px;top:420px;width:8px;background:#009600;border-top:1px solid #00dc00;border-left:1px solid #00dc00'></div><div class=pct style='left:922.5px;top:422px'>6.81%</div><div class=lbl style='left:777px;top:440px'>sd 2</div><div class=bar style='left:912px;top:438px;width:29px;background:#009600;border-top:1px solid #00dc00;border-left:1px solid #00dc00'></div><div class=pct style='left:943.5px;top:440px'>23.63%</div><div class=lbl style='left:777px;top:458px'>sd 1</div><div class=bar style='left:912px;top:456px;width:38px;background:#009600;border-top:1px solid #00dc00;border-left:1px solid #00dc00'></div><div class=pct style='left:952.5px;top:458px'>30.62%</div><div class=lbl style='left:777px;top:476px'>backdoor fd</div><div class=bar style='left:912px;top:474px;width:124px;background:#009600;border-top:1px solid #00dc00;border-left:1px solid #00dc00'></div><div class=pct style='left:914.5px;top:476px'>99.98%</div><div class=lbl style='left:777px;top:509px'>sd456+pair</div><div class=bar style='left:912px;top:507px;width:13px;background:#9b30d0;border-top:1px solid #b860f0;border-left:1px solid #b860f0'></div><div class=pct style='left:927.5px;top:509px'>10.78%</div><div class=lbl style='left:777px;top:527px'>sd12+pair</div><div class=bar style='left:912px;top:525px;width:54px;background:#9b30d0;border-top:1px solid #b860f0;border-left:1px solid #b860f0'></div><div class=pct style='left:968.5px;top:527px'>43.55%</div><div class=lbl style='left:777px;top:560px'>nut set</div><div class=bar style='left:912px;top:558px;width:2px;background:#f00050;border-top:1px solid #ff3070;border-left:1px solid #ff3070'></div><div class=pct style='left:916.5px;top:560px'>1.66%</div><div class=lbl style='left:777px;top:578px'>2nd set</div><div class=bar style='left:912px;top:576px;width:3px;background:#f00050;border-top:1px solid #ff3070;border-left:1px solid #ff3070'></div><div class=pct style='left:917.5px;top:578px'>2.31%</div><div class=lbl style='left:777px;top:596px'>3rd set</div><div class=bar style='left:912px;top:594px;width:2px;background:#f00050;border-top:1px solid #ff3070;border-left:1px solid #ff3070'></div><div class=pct style='left:916.5px;top:596px'>1.85%</div>
<div class=lbl style='left:1204px;top:160px'>set</div><div class=bar style='left:1339px;top:158px;width:41px;background:#0a64d0;border-top:1px solid #2a8af0;border-left:1px solid #2a8af0'></div><div class=pct style='left:1382.5px;top:160px'>33.35%</div><div class=lbl style='left:1204px;top:178px'>top two pair</div><div class=bar style='left:1339px;top:176px;width:15px;background:#0a64d0;border-top:1px solid #2a8af0;border-left:1px solid #2a8af0'></div><div class=pct style='left:1356.5px;top:178px'>12.46%</div><div class=lbl style='left:1204px;top:196px'>top bottom pair</div><div class=bar style='left:1339px;top:194px;width:10px;background:#0a64d0;border-top:1px solid #2a8af0;border-left:1px solid #2a8af0'></div><div class=pct style='left:1351.5px;top:196px'>7.86%</div><div class=lbl style='left:1204px;top:214px'>bottom two pair</div><div class=bar style='left:1339px;top:212px;width:4px;background:#0a64d0;border-top:1px solid #2a8af0;border-left:1px solid #2a8af0'></div><div class=pct style='left:1345.5px;top:214px'>2.93%</div><div class=lbl style='left:1204px;top:232px'>top pair</div><div class=bar style='left:1339px;top:230px;width:21px;background:#0a64d0;border-top:1px solid #2a8af0;border-left:1px solid #2a8af0'></div><div class=pct style='left:1362.5px;top:232px'>17.06%</div><div class=lbl style='left:1204px;top:250px'>pp below tp</div><div class=bar style='left:1339px;top:248px;width:30px;background:#0a64d0;border-top:1px solid #2a8af0;border-left:1px solid #2a8af0'></div><div class=pct style='left:1371.5px;top:250px'>23.91%</div><div class=lbl style='left:1204px;top:268px'>middle pair</div><div class=bar style='left:1339px;top:266px;width:1px;background:#0a64d0;border-top:1px solid #2a8af0;border-left:1px solid #2a8af0'></div><div class=pct style='left:1342.5px;top:268px'>1.16%</div><div class=lbl style='left:1204px;top:286px'>pp below mp</div><div class=bar style='left:1339px;top:284px;width:1px;background:#0a64d0;border-top:1px solid #2a8af0;border-left:1px solid #2a8af0'></div><div class=pct style='left:1342.5px;top:286px'>0.26%</div><div class=lbl style='left:1204px;top:304px'>3rd pair</div><div class=bar style='left:1339px;top:302px;width:1px;background:#0a64d0;border-top:1px solid #2a8af0;border-left:1px solid #2a8af0'></div><div class=pct style='left:1342.5px;top:304px'>0.39%</div><div class=lbl style='left:1204px;top:322px'>pp below 3rd</div><div class=bar style='left:1339px;top:320px;width:1px;background:#0a64d0;border-top:1px solid #2a8af0;border-left:1px solid #2a8af0'></div><div class=pct style='left:1342.5px;top:322px'>0.09%</div><div class=lbl style='left:1204px;top:340px'>no made hand</div><div class=bar style='left:1339px;top:338px;width:1px;background:#0a64d0;border-top:1px solid #2a8af0;border-left:1px solid #2a8af0'></div><div class=pct style='left:1342.5px;top:340px'>0.53%</div><div class=lbl style='left:1204px;top:373px'>fd (2 card)</div><div class=bar style='left:1339px;top:371px;width:61px;background:#009600;border-top:1px solid #00dc00;border-left:1px solid #00dc00'></div><div class=pct style='left:1402.5px;top:373px'>48.96%</div><div class=lbl style='left:1204px;top:391px'>nut fd</div><div class=bar style='left:1339px;top:389px;width:24px;background:#009600;border-top:1px solid #00dc00;border-left:1px solid #00dc00'></div><div class=pct style='left:1365.5px;top:391px'>19.69%</div><div class=lbl style='left:1204px;top:409px'>2nd nut fd</div><div class=bar style='left:1339px;top:407px;width:14px;background:#009600;border-top:1px solid #00dc00;border-left:1px solid #00dc00'></div><div class=pct style='left:1355.5px;top:409px'>11%</div><div class=lbl style='left:1204px;top:427px'>3rd nut fd</div><div class=bar style='left:1339px;top:425px;width:9px;background:#009600;border-top:1px solid #00dc00;border-left:1px solid #00dc00'></div><div class=pct style='left:1350.5px;top:427px'>7.05%</div><div class=lbl style='left:1204px;top:445px'>weak fd</div><div class=bar style='left:1339px;top:443px;width:14px;background:#009600;border-top:1px solid #00dc00;border-left:1px solid #00dc00'></div><div class=pct style='left:1355.5px;top:445px'>11.23%</div><div class=lbl style='left:1204px;top:463px'>sd 6</div><div class=bar style='left:1339px;top:461px;width:1px;background:#009600;border-top:1px solid #00dc00;border-left:1px solid #00dc00'></div><div class=pct style='left:1342.5px;top:463px'>0.62%</div><div class=lbl style='left:1204px;top:481px'>sd 5</div><div class=bar style='left:1339px;top:479px;width:3px;background:#009600;border-top:1px solid #00dc00;border-left:1px solid #00dc00'></div><div class=pct style='left:1344.5px;top:481px'>2.36%</div><div class=lbl style='left:1204px;top:499px'>sd 4</div><div class=bar style='left:1339px;top:497px;width:9px;background:#009600;border-top:1px solid #00dc00;border-left:1px solid #00dc00'></div><div class=pct style='left:1350.5px;top:499px'>7.23%</div><div class=lbl style='left:1204px;top:517px'>sd 3</div><div class=bar style='left:1339px;top:515px;width:8px;background:#009600;border-top:1px solid #00dc00;border-left:1px solid #00dc00'></div><div class=pct style='left:1349.5px;top:517px'>6.42%</div><div class=lbl style='left:1204px;top:535px'>sd 2</div><div class=bar style='left:1339px;top:533px;width:26px;background:#009600;border-top:1px solid #00dc00;border-left:1px solid #00dc00'></div><div class=pct style='left:1367.5px;top:535px'>21.36%</div><div class=lbl style='left:1204px;top:553px'>sd 1</div><div class=bar style='left:1339px;top:551px;width:47px;background:#009600;border-top:1px solid #00dc00;border-left:1px solid #00dc00'></div><div class=pct style='left:1388.5px;top:553px'>37.88%</div><div class=lbl style='left:1204px;top:571px'>backdoor fd</div><div class=bar style='left:1339px;top:569px;width:73px;background:#009600;border-top:1px solid #00dc00;border-left:1px solid #00dc00'></div><div class=pct style='left:1414.5px;top:571px'>58.81%</div><div class=lbl style='left:1204px;top:604px'>fd+pair</div><div class=bar style='left:1339px;top:602px;width:32px;background:#9b30d0;border-top:1px solid #b860f0;border-left:1px solid #b860f0'></div><div class=pct style='left:1373.5px;top:604px'>25.68%</div><div class=lbl style='left:1204px;top:622px'>fd+sd456</div><div class=bar style='left:1339px;top:620px;width:7px;background:#9b30d0;border-top:1px solid #b860f0;border-left:1px solid #b860f0'></div><div class=pct style='left:1348.5px;top:622px'>5.67%</div><div class=lbl style='left:1204px;top:640px'>fd+sd12</div><div class=bar style='left:1339px;top:638px;width:37px;background:#9b30d0;border-top:1px solid #b860f0;border-left:1px solid #b860f0'></div><div class=pct style='left:1378.5px;top:640px'>29.91%</div><div class=lbl style='left:1204px;top:658px'>sd456+pair</div><div class=bar style='left:1339px;top:656px;width:9px;background:#9b30d0;border-top:1px solid #b860f0;border-left:1px solid #b860f0'></div><div class=pct style='left:1350.5px;top:658px'>7.06%</div><div class=lbl style='left:1204px;top:676px'>sd12+pair</div><div class=bar style='left:1339px;top:674px;width:34px;background:#9b30d0;border-top:1px solid #b860f0;border-left:1px solid #b860f0'></div><div class=pct style='left:1375.5px;top:676px'>27.72%</div><div class=lbl style='left:1204px;top:709px'>nut set</div><div class=bar style='left:1339px;top:707px;width:38px;background:#f00050;border-top:1px solid #ff3070;border-left:1px solid #ff3070'></div><div class=pct style='left:1379.5px;top:709px'>30.45%</div><div class=lbl style='left:1204px;top:727px'>2nd set</div><div class=bar style='left:1339px;top:725px;width:2px;background:#f00050;border-top:1px solid #ff3070;border-left:1px solid #ff3070'></div><div class=pct style='left:1343.5px;top:727px'>1.44%</div><div class=lbl style='left:1204px;top:745px'>3rd set</div><div class=bar style='left:1339px;top:743px;width:2px;background:#f00050;border-top:1px solid #ff3070;border-left:1px solid #ff3070'></div><div class=pct style='left:1343.5px;top:745px'>1.46%</div><div class=lbl style='left:1204px;top:763px'>nut fd blocker</div><div class=bar style='left:1339px;top:761px;width:6px;background:#f00050;border-top:1px solid #ff3070;border-left:1px solid #ff3070'></div><div class=pct style='left:1347.5px;top:763px'>4.47%</div><div class=lbl style='left:1204px;top:781px'>2nd fd blocker</div><div class=bar style='left:1339px;top:779px;width:4px;background:#f00050;border-top:1px solid #ff3070;border-left:1px solid #ff3070'></div><div class=pct style='left:1345.5px;top:781px'>3.44%</div><div class=lbl style='left:1204px;top:799px'>3rd fd blocker</div><div class=bar style='left:1339px;top:797px;width:4px;background:#f00050;border-top:1px solid #ff3070;border-left:1px solid #ff3070'></div><div class=pct style='left:1345.5px;top:799px'>3.25%</div>
</body></html>
